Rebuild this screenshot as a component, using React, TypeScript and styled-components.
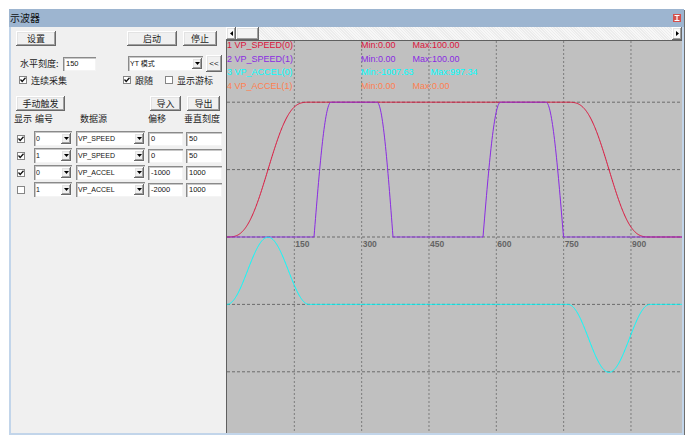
import { useMemo } from 'react'
import styled, { createGlobalStyle } from 'styled-components'

const GlobalStyle = createGlobalStyle`
  html, body {
    margin: 0;
    padding: 0;
    background: #ffffff;
  }
  body {
    font-family: "Liberation Sans", Arial, "Noto Sans CJK SC", sans-serif;
  }
`

const CJK = `"Noto Sans CJK SC", "Liberation Sans", sans-serif`
const LATIN = `"Liberation Sans", Arial, sans-serif`

const raised = `
  box-shadow: inset -1px -1px 0 #696969, inset 1px 1px 0 #ffffff,
    inset -2px -2px 0 #a0a0a0, inset 2px 2px 0 #e3e3e3;
`
const sunken = `
  box-shadow: inset 1px 1px 0 #8a8a8a, inset 2px 2px 0 #c8c8c8,
    inset -1px -1px 0 #f4f4f4;
`

// chart geometry
const W = 455
const H = 392
const GX = 67.33
const GY = 67.4
const CY = 196

const sCurve = (t: number) => t - Math.sin(2 * Math.PI * t) / (2 * Math.PI)
const speedY = (v: number) => CY - v * 1.348
const accY = (a: number) => CY + GY - a * (GY / 1000)

const redV = (x: number) => {
  if (x <= 82) return 100 * sCurve(x / 82)
  if (x < 341) return 100
  if (x <= 423) return 100 * (1 - sCurve((x - 341) / 82))
  return 0
}

const trapezoid = (x: number, a: number, b: number, c: number, d: number) => {
  if (x < a || x > d) return 0
  if (x < b) return 100 * Math.sin(((x - a) / (b - a)) * (Math.PI / 2))
  if (x <= c) return 100
  return 100 * Math.cos(((x - c) / (d - c)) * (Math.PI / 2))
}

const purpleV = (x: number) => Math.max(trapezoid(x, 87, 104, 150, 166), trapezoid(x, 256, 273.5, 319, 336.5))

const cyanA = (x: number) => {
  if (x <= 82) return 997.34 * Math.sin((Math.PI * x) / 82) ** 2
  if (x >= 341 && x <= 423) return -1007.63 * Math.sin((Math.PI * (x - 341)) / 82) ** 2
  return 0
}

const buildPath = (fn: (x: number) => number) => {
  const parts: string[] = []
  for (let x = 0; x <= W; x += 0.5) {
    parts.push(`${x === 0 ? 'M' : 'L'}${x.toFixed(1)} ${fn(x).toFixed(2)}`)
  }
  return parts.join(' ')
}

const legend = [
  { name: '1 VP_SPEED(0)', min: 'Min:0.00', max: 'Max:100.00', color: '#dc143c' },
  { name: '2 VP_SPEED(1)', min: 'Min:0.00', max: 'Max:100.00', color: '#8a2be2' },
  { name: '3 VP_ACCEL(0)', min: 'Min:-1007.63', max: 'Max:997.34', color: '#00ffff' },
  { name: '4 VP_ACCEL(1)', min: 'Min:0.00', max: 'Max:0.00', color: '#ff7f50' },
]

const channels = [
  { on: true, id: '0', src: 'VP_SPEED', offset: '0', scale: '50' },
  { on: true, id: '1', src: 'VP_SPEED', offset: '0', scale: '50' },
  { on: true, id: '0', src: 'VP_ACCEL', offset: '-1000', scale: '1000' },
  { on: false, id: '1', src: 'VP_ACCEL', offset: '-2000', scale: '1000' },
]

const Tick = () => (
  <svg width="6" height="6" viewBox="0 0 6 6">
    <path d="M0.5 2.5 L2.2 4.5 L5.5 0.8" fill="none" stroke="#111" strokeWidth="1.3" />
  </svg>
)

const DownArrow = () => (
  <svg width="5" height="3" viewBox="0 0 5 3">
    <path d="M0 0 H5 L2.5 3 Z" fill="#000" />
  </svg>
)

const CheckBox = ({ checked }: { checked: boolean }) => <Box>{checked && <Tick />}</Box>

const Combo = ({ value, w }: { value: string; w: number }) => (
  <ComboField $w={w}>
    <ComboText>{value}</ComboText>
    <ComboButton>
      <DownArrow />
    </ComboButton>
  </ComboField>
)

const Scope = () => {
  const red = useMemo(() => buildPath((x) => speedY(redV(x))), [])
  const purple = useMemo(() => buildPath((x) => speedY(purpleV(x))), [])
  const cyan = useMemo(() => buildPath((x) => accY(cyanA(x))), [])
  const vLines = [1, 2, 3, 4, 5, 6].map((k) => k * GX)
  const hLines = [-2, -1, 0, 1, 2].map((k) => CY + k * GY)

  return (
    <ChartArea>
      <svg width={W} height={H} viewBox={`0 0 ${W} ${H}`}>
        {hLines.map((y) => (
          <line key={y} x1={0} x2={W} y1={y} y2={y} stroke="#6c6c6c" strokeDasharray="3 2" />
        ))}
        {vLines.map((x) => (
          <line key={x} x1={x} x2={x} y1={0} y2={H} stroke="#7c7c7c" strokeDasharray="2 2" />
        ))}
        <path d={red} fill="none" stroke="#dc143c" strokeWidth="1" />
        <path d={purple} fill="none" stroke="#8a2be2" strokeWidth="1" />
        <path d={cyan} fill="none" stroke="#00ffff" strokeWidth="1" />
        {vLines.map((x, i) => (
          <AxisLabel key={x} x={x + 1} y={CY + 10}>
            {(i + 1) * 150}
          </AxisLabel>
        ))}
      </svg>
      <Legend>
        {legend.map((l) => (
          <LegendRow key={l.name} $color={l.color}>
            <LegendName>{l.name}</LegendName>
            <LegendMin>{l.min}</LegendMin>
            <span>{l.max}</span>
          </LegendRow>
        ))}
      </Legend>
    </ChartArea>
  )
}

const App = () => {
  return (
    <>
      <GlobalStyle />
      <Window>
        <TitleBar>
          <TitleText>示波器</TitleText>
          <CloseButton>
            <svg width="6" height="6" viewBox="0 0 6 6">
              <path d="M0.5 0.5 H5.5 M3 0.5 V5.5 M0.5 5.5 H5.5" stroke="#fff" strokeWidth="1.2" />
            </svg>
          </CloseButton>
        </TitleBar>
        <Body>
          <Panel>
            <Row $mt={4} $h={15}>
              <Button $w={40} $ml={2}>设置</Button>
              <Button $w={50} $ml={71}>启动</Button>
              <Button $w={34} $ml={6}>停止</Button>
            </Row>
            <Row $mt={9} $h={17}>
              <FieldLabel $w={43} $ml={6}>水平刻度:</FieldLabel>
              <TextInput $w={33}>150</TextInput>
              <Gap $w={32} />
              <Combo value="YT 模式" w={75} />
              <Button $w={16} $ml={3} $h={17} $latin>
                {'<<'}
              </Button>
            </Row>
            <Row $mt={3} $h={10}>
              <CheckItem $w={104} $ml={5}>
                <CheckBox checked />
                <CheckText>连续采集</CheckText>
              </CheckItem>
              <CheckItem $w={42}>
                <CheckBox checked />
                <CheckText>跟随</CheckText>
              </CheckItem>
              <CheckItem $w={55}>
                <CheckBox checked={false} />
                <CheckText>显示游标</CheckText>
              </CheckItem>
            </Row>
            <Row $mt={11} $h={15}>
              <Button $w={49} $ml={2}>手动触发</Button>
              <Button $w={31} $ml={85}>导入</Button>
              <Button $w={33} $ml={6}>导出</Button>
            </Row>
            <TableHeader>
              <HeadCell $pl={0}>显示</HeadCell>
              <HeadCell $pl={1}>编号</HeadCell>
              <HeadCell $pl={4}>数据源</HeadCell>
              <HeadCell $pl={0}>偏移</HeadCell>
              <HeadCell $pl={-2}>垂直刻度</HeadCell>
            </TableHeader>
            {channels.map((c, i) => (
              <TableRow key={i}>
                <CheckCell>
                  <CheckBox checked={c.on} />
                </CheckCell>
                <Combo value={c.id} w={38} />
                <Combo value={c.src} w={69} />
                <TextInput $w={35}>{c.offset}</TextInput>
                <TextInput $w={36}>{c.scale}</TextInput>
              </TableRow>
            ))}
          </Panel>
          <RightColumn>
            <HScroll>
              <ScrollButton>
                <svg width="3" height="5" viewBox="0 0 3 5">
                  <path d="M3 0 V5 L0 2.5 Z" fill="#000" />
                </svg>
              </ScrollButton>
              <ScrollThumb />
              <ScrollTrack />
              <ScrollButton>
                <svg width="3" height="5" viewBox="0 0 3 5">
                  <path d="M0 0 V5 L3 2.5 Z" fill="#000" />
                </svg>
              </ScrollButton>
            </HScroll>
            <Scope />
          </RightColumn>
        </Body>
      </Window>
    </>
  )
}

const Window = styled.div`
  margin: 9px 0 0 9px;
  width: 675px;
  display: flex;
  flex-direction: column;
  box-shadow: 1px 1px 0 #6f6f6f;
`

const TitleBar = styled.div`
  height: 18px;
  background: #9db5d0;
  display: flex;
  align-items: center;
  justify-content: space-between;
  padding: 0 3px 0 1px;
`

const TitleText = styled.span`
  font: 10px/18px ${CJK};
  color: #101010;
`

const CloseButton = styled.span`
  width: 8px;
  height: 8px;
  background: #d5504c;
  display: flex;
  align-items: center;
  justify-content: center;
`

const Body = styled.div`
  display: flex;
  height: 406px;
  border: 2px solid #c2d5ea;
  border-top: none;
`

const Panel = styled.div`
  width: 215px;
  background: #f0f0f0;
  display: flex;
  flex-direction: column;
  padding-left: 3px;
  box-sizing: border-box;
`

const Row = styled.div<{ $mt: number; $h: number }>`
  display: flex;
  align-items: center;
  height: ${(p) => p.$h}px;
  margin-top: ${(p) => p.$mt}px;
`

const Button = styled.button<{ $w: number; $ml?: number; $h?: number; $latin?: boolean }>`
  width: ${(p) => p.$w}px;
  height: ${(p) => p.$h ?? 15}px;
  margin-left: ${(p) => p.$ml ?? 0}px;
  padding: 0;
  border: none;
  background: #f0f0f0;
  ${raised}
  color: #222;
  font: ${(p) => (p.$latin ? `8px/1 ${LATIN}` : `9px/1 ${CJK}`)};
  flex-shrink: 0;
`

const FieldLabel = styled.span<{ $w: number; $ml: number }>`
  width: ${(p) => p.$w}px;
  margin-left: ${(p) => p.$ml}px;
  font: 9px/1 ${CJK};
  color: #222;
  white-space: nowrap;
`

const TextInput = styled.div<{ $w: number }>`
  width: ${(p) => p.$w}px;
  height: 14px;
  background: #fff;
  ${sunken}
  box-sizing: border-box;
  padding: 0 3px;
  font: 7.5px/14px ${LATIN};
  color: #111;
  flex-shrink: 0;
`

const Gap = styled.span<{ $w: number }>`
  width: ${(p) => p.$w}px;
  flex-shrink: 0;
`

const ComboField = styled.div<{ $w: number }>`
  width: ${(p) => p.$w}px;
  height: 15px;
  background: #fff;
  ${sunken}
  box-sizing: border-box;
  padding: 2px 1px 2px 2px;
  display: flex;
  align-items: center;
  flex-shrink: 0;
`

const ComboText = styled.span`
  flex: 1;
  font: 7px/11px ${LATIN}, "Noto Sans CJK SC";
  color: #111;
  white-space: nowrap;
  overflow: hidden;
`

const ComboButton = styled.span`
  width: 10px;
  height: 11px;
  background: #f0f0f0;
  ${raised}
  display: flex;
  align-items: center;
  justify-content: center;
`

const CheckItem = styled.label<{ $w: number; $ml?: number }>`
  width: ${(p) => p.$w}px;
  margin-left: ${(p) => p.$ml ?? 0}px;
  display: flex;
  align-items: center;
  gap: 4px;
  flex-shrink: 0;
`

const Box = styled.span`
  width: 8px;
  height: 8px;
  box-sizing: border-box;
  background: #fff;
  border: 1px solid #858585;
  display: flex;
  align-items: center;
  justify-content: center;
`

const CheckText = styled.span`
  font: 9px/1 ${CJK};
  color: #222;
  white-space: nowrap;
`

const TableHeader = styled.div`
  display: grid;
  grid-template-columns: 20px 42px 72px 38px 36px;
  height: 10px;
  margin-top: 2px;
  align-items: center;
`

const HeadCell = styled.span<{ $pl: number }>`
  font: 9px/1 ${CJK};
  color: #222;
  margin-left: ${(p) => p.$pl}px;
  white-space: nowrap;
`

const TableRow = styled.div`
  display: grid;
  grid-template-columns: 20px 42px 72px 38px 36px;
  height: 15px;
  margin-top: 8px;
  align-items: center;

  & + & {
    margin-top: 2px;
  }
`

const CheckCell = styled.span`
  padding-left: 3px;
`

const RightColumn = styled.div`
  width: 456px;
  display: flex;
  flex-direction: column;
`

const HScroll = styled.div`
  height: 13px;
  display: flex;
  background: #f5f5f5;
`

const ScrollButton = styled.span`
  width: 10px;
  height: 13px;
  background: #f8f8f8;
  ${raised}
  display: flex;
  align-items: center;
  justify-content: center;
`

const ScrollThumb = styled.span`
  width: 23px;
  height: 13px;
  background: #f4f4f4;
  ${raised}
`

const ScrollTrack = styled.span`
  flex: 1;
  background-image: repeating-linear-gradient(45deg, #f7f7f7 0 1px, #ececec 1px 2px);
`

const ChartArea = styled.div`
  position: relative;
  height: ${H}px;
  background: #c0c0c0;
  border-top: 1px solid #5f5f5f;
  border-left: 1px solid #5f5f5f;
  overflow: hidden;

  svg {
    display: block;
  }
`

const AxisLabel = styled.text`
  font: bold 8.5px ${LATIN};
  fill: #646464;
`

const Legend = styled.div`
  position: absolute;
  left: 0;
  top: -2px;
  font: 9px/13.7px ${LATIN};
`

const LegendRow = styled.div<{ $color: string }>`
  display: flex;
  height: 13.7px;
  color: ${(p) => p.$color};
  white-space: nowrap;
`

const LegendName = styled.span`
  width: 134px;
`

const LegendMin = styled.span`
  margin-right: 17px;
`

export default App
